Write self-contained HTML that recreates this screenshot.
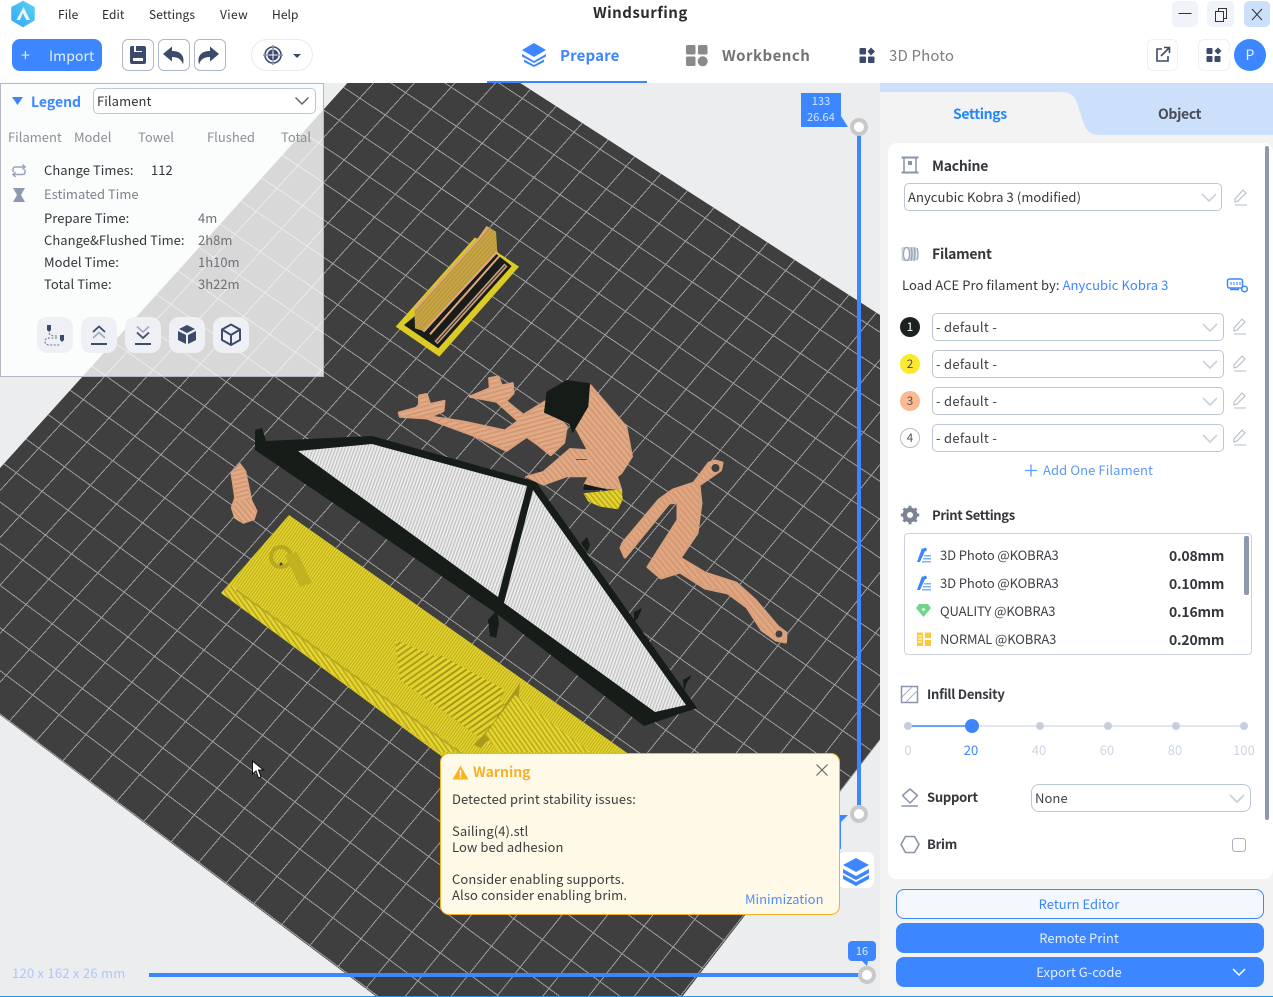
<!DOCTYPE html>
<html><head><meta charset="utf-8"><style>
html,body{margin:0;padding:0;width:1273px;height:997px;overflow:hidden;background:#fff}
body{position:relative;font-family:"Noto Sans CJK SC","Liberation Sans",sans-serif;font-size:13px;color:#3a3d42;letter-spacing:.08px}
.t{position:absolute;white-space:nowrap;line-height:20px;height:20px}
.b{font-weight:700;letter-spacing:-.25px}
.box{position:absolute;box-sizing:border-box}
.sel{position:absolute;box-sizing:border-box;background:#fff;border:1px solid #bcc6d8;border-radius:5px}
svg{position:absolute;overflow:hidden}
.d{letter-spacing:.3px}
.k{letter-spacing:-.1px}
.l{letter-spacing:.04px}
.z{letter-spacing:0}
</style></head><body>

<svg id="scene" style="left:0;top:0" width="1273" height="997" viewBox="0 0 1273 997">
<defs>
<clipPath id="bedclip"><polygon points="0,468 411,12.6 880,315 880,740 682,997 377,997 0,715"/></clipPath>
<pattern id="pe2" width="4.5" height="4.5" patternUnits="userSpaceOnUse" patternTransform="rotate(-40)"><rect width="4.5" height="4.5" fill="#e2a681"/><rect width="1.6" height="4.5" fill="#cf9874"/></pattern>
<pattern id="pf1" width="13" height="13" patternUnits="userSpaceOnUse" patternTransform="rotate(75)"><rect width="13" height="13" fill="#e4a985"/><rect width="5" height="13" fill="#cf9874"/></pattern>
<pattern id="pf2" width="13" height="13" patternUnits="userSpaceOnUse" patternTransform="rotate(-40)"><rect width="13" height="13" fill="#e4a985"/><rect width="5" height="13" fill="#cf9874"/></pattern>
<pattern id="wh" width="3" height="3" patternUnits="userSpaceOnUse" patternTransform="rotate(20)"><rect width="3" height="3" fill="#eeeeee"/><rect width="1.200" height="3" fill="#bebebe"/></pattern>
<pattern id="ye" width="2.5" height="2.5" patternUnits="userSpaceOnUse" patternTransform="rotate(35)"><rect width="2.500" height="2.500" fill="#e4d42c"/><rect width=".8" height="2.500" fill="#b3a31e"/></pattern>
<pattern id="ye2" width="5" height="5" patternUnits="userSpaceOnUse" patternTransform="rotate(55)"><rect width="5" height="5" fill="#e6d52e"/><rect width="2" height="5" fill="#a6971c"/></pattern>
<pattern id="ye3" width="4" height="4" patternUnits="userSpaceOnUse" patternTransform="rotate(-35)"><rect width="4" height="4" fill="#e6d52e"/><rect width="1.500" height="4" fill="#b8a820"/></pattern>
<pattern id="yf" width="12" height="12" patternUnits="userSpaceOnUse" patternTransform="rotate(-40)"><rect width="12" height="12" fill="#e4d42c"/><rect width="4" height="12" fill="#b3a31e"/></pattern>
<pattern id="tan" width="9" height="9" patternUnits="userSpaceOnUse" patternTransform="rotate(-48)"><rect width="9" height="9" fill="#c9a44e"/><rect width="9" height="4" fill="#b89a30"/></pattern>
</defs>
<rect width="1273" height="997" fill="#ecedef"/>
<polygon points="0,468 411,12.6 880,315 880,740 682,997 377,997 0,715" fill="#3f3f3f"/>
<g id="grid" clip-path="url(#bedclip)" stroke="#9c9c9c" stroke-width="1" fill="none" shape-rendering="crispEdges"></g>

<!-- yellow plate -->
<polygon points="289,515 640,762 460,770 221,593" fill="url(#ye)"/>
<polygon points="221,593 440,752 462,752 233,586" fill="url(#ye3)"/>
<path d="M236,590 462,754" stroke="#b9a922" stroke-width="2" fill="none"/>
<polygon points="395,640 445,660 520,715 490,745 400,680" fill="url(#ye2)" opacity=".85"/>
<polygon points="440,655 505,690 480,730 425,695" fill="url(#ye2)"/>
<polygon points="520,682 492,725 474,745 481,748 518,705" fill="#a89a1e"/>
<polygon points="515,695 590,752 500,752 485,735" fill="url(#ye3)"/>
<circle cx="281" cy="557" r="10" fill="none" stroke="#b8a820" stroke-width="4"/>
<polygon points="285,555 297,552 312,583 300,587" fill="#c2b222"/>
<circle cx="281" cy="564" r="1.500" fill="#444"/>

<!-- sail -->
<path d="M255,430 262,428 266,441 372,436 536,482 697,708 644,726 493,611 255,450Z" fill="#161c18"/>
<path d="M590,545 587,537 581,543 587,552Z M638,618 642,608 634,612 634,622Z M686,684 692,675 683,680 684,692Z M488,620 497,610 499,624 496,638 490,636Z" fill="#161c18"/>
<polygon points="298,451 372,444 527,486 498,597" fill="url(#wh)"/>
<polygon points="533,490 504,603 655,712 686,705" fill="url(#wh)"/>

<!-- peach peg -->
<g transform="translate(0,376) scale(.3333)">
<path d="M694,292 720,264 736,285 755,375 770,405 762,430 730,441 705,425 695,395 705,365Z" fill="url(#pf1)" stroke="#d9a07c" stroke-width="5"/>
<circle cx="733" cy="405" r="35" fill="url(#pf2)"/>
</g>

<!-- top small model & figure -->
<g transform="translate(380,220) scale(.3333)">
<polygon points="47,320 285,52 417,140 178,410" fill="#dccb26"/>
<polygon points="72,315 340,95 395,138 175,385" fill="#181d19"/>
<polygon points="103,265 295,52 320,18 348,35 352,95 135,335 105,325" fill="url(#tan)"/>
<path d="M105,268 300,52 322,20 M130,335 352,95 M150,343 358,108" stroke="#e2a681" stroke-width="6" fill="none"/>
<path d="M168,368 378,135" stroke="#c99a7c" stroke-width="13" fill="none"/>
<path d="M170,366 376,137" stroke="#2a2a26" stroke-width="3" fill="none"/>

<path d="M57,578 117,562 118,527 140,523 150,553 193,543 190,573 150,590 250,605 375,632 415,603 350,545 270,530 330,505 328,475 355,470 365,497 398,490 400,520 378,543 430,585 495,545 560,620 552,668 512,705 475,675 440,650 380,692 290,650 140,595 60,590Z" fill="url(#pf1)" stroke="#d9a07c" stroke-width="7" stroke-linejoin="round"/>
<path d="M632,495 740,620 757,710 725,760 712,770 725,810 612,795 625,770 560,770 490,795 438,770 490,755 570,686 622,690 585,620 625,555Z" fill="url(#pf2)" stroke="#d9a07c" stroke-width="4" stroke-linejoin="round"/>
<path d="M500,515 560,480 630,490 625,560 578,640 568,612 492,578Z" fill="#151b17"/>
<path d="M612,792 688,810 610,810Z" fill="#151b17"/>
<path d="M610,820 726,808 728,840 714,868 660,860 625,845Z" fill="url(#yf)"/>
<path d="M588,718 620,718 M470,745 482,755" stroke="#222" stroke-width="2"/>
</g>

<!-- wrench -->
<path d="M709,463 694,483 673,490 659,500 623,543 621,548 625,557 669,503 678,502 678,520 648,567 661,578 680,572 705,588 728,593 747,607 762,630 776,640 785.500,642 786,633 778,627 755,600 736,583 705,573 680,558 697,533 701,503 699,485 720.500,470 722,463 715,461Z" fill="url(#pe2)" stroke="#d9a07c" stroke-width="3" stroke-linejoin="round"/>
<circle cx="715.500" cy="468" r="4" fill="#3f3f3f"/>
<circle cx="779" cy="634" r="3.500" fill="#3f3f3f"/>

<!-- cursor -->
<path d="M252.500,761 V774 L256,771 258.500,778 261,777 258.500,770 263.500,770Z" fill="#fff" stroke="#111" stroke-width="1"/>

<!-- sliders -->
<rect x="857" y="130" width="4" height="685" fill="#3c86ff"/>
<path d="M801,93H841V116L848,127H801Z" fill="#3c86ff"/>
<circle cx="859" cy="127" r="7" fill="#fff" stroke="#c9c9c9" stroke-width="4"/>
<circle cx="859" cy="814" r="7" fill="#fff" stroke="#c9c9c9" stroke-width="4"/>
<rect x="840" y="815" width="1" height="34" fill="#3c86ff"/>
<path d="M839,815H848L839,824Z" fill="#3c86ff"/>
<rect x="149" y="973" width="715" height="4" fill="#3c86ff"/>
<rect x="848" y="941" width="28" height="20" rx="4" fill="#3c86ff"/>
<path d="M862,961h6l-1,5Z" fill="#3c86ff"/>
<circle cx="867" cy="975" r="7" fill="#fff" stroke="#c9c9c9" stroke-width="4"/>
<rect x="838" y="852" width="36" height="36" rx="7" fill="#fff"/>
<g fill="#3c86ff"><path d="M856,858 869,865 856,872 843,865Z"/><path d="M843,869 856,876 869,869 869,873 856,880 843,873Z"/><path d="M843,875 856,882 869,875 869,879 856,886 843,879Z"/></g>
</svg>

<div class="t" style="left:801px;width:40px;top:91px;text-align:center;color:#d5e4ff;font-size:11px;line-height:20px">133</div>
<div class="t" style="left:801px;width:40px;top:107px;text-align:center;color:#d5e4ff;font-size:11px;line-height:20px">26.64</div>
<div class="t" style="left:848px;width:28px;top:941px;text-align:center;color:#e3edff;font-size:11px">16</div>
<div class="t" style="left:12px;top:963px;color:#a9c8fb;font-size:13px;letter-spacing:.25px">120 x 162 x 26 mm</div>
<div class="box" style="left:0;top:996px;width:1273px;height:1px;background:#1f93ee"></div>

<!-- header -->
<div class="box" style="left:0;top:0;width:1273px;height:83px;background:#fff"></div>
<svg style="left:8px;top:0" width="30" height="28" viewBox="0 0 30 28">
<defs><linearGradient id="lg" x1="0" y1="1" x2="1" y2="0"><stop offset="0" stop-color="#36a7f5"/><stop offset="1" stop-color="#58d2f2"/></linearGradient></defs>
<path d="M15,1.500 26,7.500 26,20 15,26.500 4,20 4,7.500Z" fill="url(#lg)" stroke="url(#lg)" stroke-linejoin="round" stroke-width="1.500"/>
<path d="M15.500,7 22,20 18.300,20 14.800,13 12,20 8.500,20 Z" fill="#e8f6ff"/>
</svg>
<div class="t" style="left:58px;top:5px;font-size:12px;color:#26292e">File</div>
<div class="t" style="left:102px;top:5px;font-size:12px;color:#26292e">Edit</div>
<div class="t" style="left:149px;top:5px;font-size:12px;color:#26292e">Settings</div>
<div class="t" style="left:220px;top:5px;font-size:12px;color:#26292e;letter-spacing:.4px">View</div>
<div class="t" style="left:272px;top:5px;font-size:12px;color:#26292e">Help</div>
<div class="t b" style="left:593px;top:3px;font-size:15px;color:#2b2b2b;letter-spacing:.45px">Windsurfing</div>

<div class="box" style="left:1172px;top:1px;width:26px;height:26px;background:#f0f3fa;border-radius:5px"></div>
<div class="box" style="left:1207px;top:1px;width:27px;height:26px;background:#f0f3fa;border-radius:5px"></div>
<div class="box" style="left:1244px;top:1px;width:26px;height:26px;background:#cde0fb;border-radius:5px"></div>
<svg style="left:1172px;top:0" width="100" height="28" viewBox="1172 0 100 28" fill="none" stroke="#333" stroke-width="1">
<path d="M1178.500,13.500h13"/><path d="M1215.500,11.500h8v10h-8z M1218.500,11.500v-3h8v10h-3"/><path d="M1252,9l10,11M1262,9l-10,11"/>
</svg>

<div class="box" style="left:12px;top:39px;width:90px;height:32px;background:#3c86ff;border-radius:8px"></div>
<div class="t" style="left:21px;top:44px;color:#dce9ff;font-size:16px">+</div>
<div class="t" style="left:49px;top:46px;color:#e6efff;font-size:14px">Import</div>

<div class="box" style="left:122px;top:39px;width:32px;height:32px;border:1px solid #aeb7c9;border-radius:6px"></div>
<div class="box" style="left:158px;top:39px;width:32px;height:32px;border:1px solid #aeb7c9;border-radius:6px"></div>
<div class="box" style="left:194px;top:39px;width:32px;height:32px;border:1px solid #aeb7c9;border-radius:6px"></div>
<svg style="left:122px;top:39px" width="104" height="32" viewBox="0 0 104 32" fill="#3c4a6b">
<path fill-rule="evenodd" d="M10,7h2v6h8V7h2a2,2 0 0 1 2,2v14a2,2 0 0 1-2,2H10a2,2 0 0 1-2-2V9a2,2 0 0 1 2-2Zm1,12v3h10v-3Z"/><rect x="14" y="7" width="6" height="5"/>
<path d="M41,15 50,7.500 50,12C59,12 63,17 61,25.500 59.500,20.500 56,18 50,18L50,22.500Z"/>
<path d="M97,15 88,7.500 88,12C79,12 75,17 77,25.500 78.500,20.500 82,18 88,18L88,22.500Z"/>
</svg>
<div class="box" style="left:251px;top:39px;width:62px;height:32px;border:1px solid #e8eaf0;border-radius:16px"></div>
<svg style="left:260px;top:42px" width="50" height="26" viewBox="0 0 50 26">
<circle cx="13" cy="13" r="8" fill="#fff" stroke="#3c4a6b" stroke-width="1.600"/><circle cx="13" cy="13" r="5.500" fill="#3c4a6b"/>
<path d="M13,3V7M13,19V23M3,13H7M19,13H23" stroke="#8a97b5" stroke-width="1.600"/><path d="M13,8.500v9M8.500,13h9" stroke="#fff" stroke-width="1"/>
<path d="M33,12h8l-4,4Z" fill="#3c4a6b"/>
</svg>

<!-- center tabs -->
<div class="box" style="left:487px;top:81px;width:160px;height:2px;background:#3c86ff"></div>
<svg style="left:520px;top:42px" width="28" height="26" viewBox="0 0 28 26" fill="#3c86ff">
<path d="M14,1 26,8 14,15 2,8Z"/><path d="M2,12 14,19 26,12 26,14.500 14,21 2,14.500Z"/><path d="M4,17.500 14,23 24,17.500 24,20 14,25 4,20Z"/>
</svg>
<div class="t b" style="left:560px;top:46px;font-size:15px;color:#3c86ff;letter-spacing:.15px">Prepare</div>
<svg style="left:685px;top:44px" width="24" height="23" viewBox="0 0 24 23" fill="#8a8a8a">
<rect x="1" y="1" width="9.500" height="9.500" rx="1.500"/><rect x="13" y="1" width="9.500" height="9.500" rx="1.500"/><rect x="1" y="12.500" width="9.500" height="9.500" rx="1.500"/><circle cx="17.700" cy="17.300" r="5"/>
</svg>
<div class="t b" style="left:722px;top:46px;font-size:15px;color:#737373;letter-spacing:.45px">Workbench</div>
<svg style="left:859px;top:47px" width="18" height="17" viewBox="0 0 18 17" fill="#3c4a6b">
<rect x="0.500" y="1" width="6.500" height="6.500" rx="1"/><path d="M12,0.500 16,4.500 12,8.500 8.500,4.500Z"/><rect x="0.500" y="9.500" width="6.500" height="6.500" rx="1"/><rect x="9" y="9.500" width="6.500" height="6.500" rx="1"/>
</svg>
<div class="t" style="left:889px;top:46px;font-size:15px;color:#7d7d7d;letter-spacing:.15px">3D Photo</div>

<div class="box" style="left:1147px;top:39px;width:31px;height:32px;border:1px solid #eef0f5;border-radius:6px"></div>
<div class="box" style="left:1198px;top:39px;width:32px;height:32px;border:1px solid #eef0f5;border-radius:6px"></div>
<svg style="left:1147px;top:39px" width="90" height="32" viewBox="0 0 90 32">
<path d="M15,10H10v12h11v-5M14,17 22,9M17,8.500h5.500V14" fill="none" stroke="#3c4a6b" stroke-width="1.600"/>
<rect x="59.500" y="9" width="6" height="6" rx="1" fill="#3c4a6b"/><path d="M71,8.500 74.500,12 71,15.500 67.500,12Z" fill="#3c4a6b"/><rect x="59.500" y="17" width="6" height="6" rx="1" fill="#3c4a6b"/><rect x="67.500" y="17" width="6" height="6" rx="1" fill="#3c4a6b"/>
</svg>
<div class="box" style="left:1234px;top:39px;width:32px;height:32px;background:#3c86ff;border-radius:50%;box-shadow:-5px 0 0 #fff"></div>
<div class="t" style="left:1234px;width:32px;top:45px;text-align:center;color:#e6efff;font-size:14px">P</div>

<!-- legend -->
<div class="box" style="left:0;top:83px;width:324px;height:294px;background:rgba(255,255,255,.8);border:1px solid #b3b8c4"></div>
<svg style="left:11px;top:96px" width="13" height="10"><path d="M1,1H12L6.500,9Z" fill="#3c86ff"/></svg>
<div class="t b" style="left:31px;top:92px;font-size:14px;color:#3c86ff;letter-spacing:0">Legend</div>
<div class="sel" style="left:93px;top:88px;width:223px;height:26px"></div>
<div class="t" style="left:97px;top:91px;color:#2f3237">Filament</div>
<svg style="left:294px;top:96px" width="16" height="10"><path d="M1.500,1.500 8,8 14.500,1.500" fill="none" stroke="#5b6478" stroke-width="1.500"/></svg>
<div class="t z" style="left:8px;top:127px;color:#8b9098">Filament</div>
<div class="t z" style="left:74px;top:127px;color:#8b9098">Model</div>
<div class="t z" style="left:138px;top:127px;color:#8b9098">Towel</div>
<div class="t z" style="left:207px;top:127px;color:#8b9098">Flushed</div>
<div class="t z" style="left:281px;top:127px;color:#8b9098">Total</div>
<svg style="left:10px;top:162px" width="18" height="44" viewBox="0 0 18 44" fill="none" stroke="#99a3b8" stroke-width="1.500">
<path d="M3,10V7.500Q3,5 5.500,5H15M12.500,2.500 15,5 12.500,7.500M15,7.500V10Q15,12.500 12.500,12.500H3M5.500,10 3,12.500 5.500,15"/>
<path d="M3,26H15L11,33 15,40H3L7,33Z" fill="#8f99ad" stroke="none"/>
</svg>
<div class="t l" style="left:44px;top:160px;color:#33363b">Change Times:</div>
<div class="t l" style="left:151px;top:160px;color:#33363b">112</div>
<div class="t z" style="left:44px;top:184px;color:#7d828b">Estimated Time</div>
<div class="t l" style="left:44px;top:208px;color:#33363b">Prepare Time:</div>
<div class="t z" style="left:198px;top:208px;color:#6c7077">4m</div>
<div class="t l" style="left:44px;top:230px;color:#33363b">Change&amp;Flushed Time:</div>
<div class="t z" style="left:198px;top:230px;color:#6c7077">2h8m</div>
<div class="t l" style="left:44px;top:252px;color:#33363b">Model Time:</div>
<div class="t z" style="left:198px;top:252px;color:#6c7077">1h10m</div>
<div class="t l" style="left:44px;top:274px;color:#33363b">Total Time:</div>
<div class="t z" style="left:198px;top:274px;color:#6c7077">3h22m</div>
<div class="box" style="left:37px;top:317px;width:36px;height:36px;background:#eef0f5;border-radius:10px"></div>
<div class="box" style="left:81px;top:317px;width:36px;height:36px;background:#eef0f5;border-radius:10px"></div>
<div class="box" style="left:125px;top:317px;width:36px;height:36px;background:#eef0f5;border-radius:10px"></div>
<div class="box" style="left:169px;top:317px;width:36px;height:36px;background:#eef0f5;border-radius:10px"></div>
<div class="box" style="left:213px;top:317px;width:36px;height:36px;background:#eef0f5;border-radius:10px"></div>
<svg style="left:37px;top:317px" width="212" height="36" viewBox="0 0 212 36" fill="none">
<path d="M10,8h4v5l-2,2-2-2Z M23,18h4v5l-2,2-2-2Z" fill="#3c4a6b"/>
<path d="M12,16Q13,19 18,19H20M20,21H13Q8,21 8,24.500T13,28H23" stroke="#6b7690" stroke-width="1.100" stroke-dasharray="2 1.500"/>
<path d="M56,15 62,9.500 68,15" stroke="#3c4a6b" stroke-width="1.800"/><path d="M56,21 62,15.500 68,21" stroke="#a5aec0" stroke-width="1.800"/><path d="M54,27H70" stroke="#3c4a6b" stroke-width="2"/>
<path d="M100,9.500 106,15 112,9.500" stroke="#a5aec0" stroke-width="1.800"/><path d="M100,15.500 106,21 112,15.500" stroke="#3c4a6b" stroke-width="1.800"/><path d="M98,27H114" stroke="#3c4a6b" stroke-width="2"/>
<path d="M150,8 158,12 150,16 142,12Z M141,14 149,18V27L141,23Z M159,14 151,18V27L159,23Z" fill="#3c4a6b"/>
<path d="M194,7.500 203,12.500V23L194,28 185,23V12.500ZM185,12.500 194,18 203,12.500M194,18V28" stroke="#3c4a6b" stroke-width="2" stroke-linejoin="round"/>
</svg>

<!-- warning -->
<div class="box" style="left:440px;top:753px;width:400px;height:162px;background:#fff9e7;border:1px solid #f5b324;border-radius:9px"></div>
<svg style="left:452px;top:765px" width="17" height="15"><path d="M8.500,.5 16.500,14.500H.5Z" fill="#f9b320"/><path d="M8.500,5v5.500M8.500,11.500v1.500" stroke="#fff" stroke-width="1.400"/></svg>
<div class="t b" style="left:473px;top:762px;font-size:14px;color:#f7b02a;letter-spacing:0">Warning</div>
<svg style="left:815px;top:763px" width="14" height="14"><path d="M1.500,1.500 12.500,12.500M12.500,1.500 1.500,12.500" stroke="#666" stroke-width="1.200"/></svg>
<div class="t" style="left:452px;top:789px;color:#3c3c3c">Detected print stability issues:</div>
<div class="t" style="left:452px;top:821px;color:#3c3c3c">Sailing(4).stl</div>
<div class="t" style="left:452px;top:837px;color:#3c3c3c">Low bed adhesion</div>
<div class="t" style="left:452px;top:869px;color:#3c3c3c">Consider enabling supports.</div>
<div class="t" style="left:452px;top:885px;color:#3c3c3c;letter-spacing:.12px">Also consider enabling brim.</div>
<div class="t z" style="left:745px;top:889px;color:#4f8ff5">Minimization</div>

<!-- right panel -->
<div class="box" style="left:880px;top:83px;width:393px;height:913px;background:#f3f3f4"></div>
<svg style="left:880px;top:83px" width="393" height="52" viewBox="0 0 393 52">
<rect width="393" height="52" fill="#cce0fc"/>
<path d="M0,9H182Q193,9 197,20L204,41Q208,52 219,52H0Z" fill="#f3f3f4"/>
</svg>
<div class="t b" style="left:953px;top:104px;color:#1f87ff;font-size:14px;letter-spacing:-.35px">Settings</div>
<div class="t b" style="left:1158px;top:104px;color:#4a4d55;font-size:14px;letter-spacing:-.35px">Object</div>
<div class="box" style="left:888px;top:143px;width:385px;height:736px;background:#fff;border-radius:9px"></div>
<div class="box" style="left:1265px;top:146px;width:4px;height:674px;background:#8d99b0;border-radius:2px"></div>

<svg style="left:900px;top:155px" width="20" height="110" viewBox="0 0 20 110">
<path d="M1.500,2.500H18.500M1.500,17.500H18.500" stroke="#8a94a8" stroke-width="2"/><path d="M4,3V17M16,3V17" stroke="#8a94a8" stroke-width="1.500"/><rect x="8" y="6" width="4" height="4" fill="#8a94a8"/>
<g fill="none" stroke="#97a1b5" stroke-width="1.200"><rect x="1.500" y="92" width="15" height="14" rx="2" fill="#cdd3de" stroke="none"/><ellipse cx="6.500" cy="99" rx="3" ry="6.500" fill="#fff"/><path d="M11,92.500Q13,99 11,105.500M14,92.500Q16,99 14,105.500M17,93Q19,99 17,105"/></g>
</svg>
<div class="t b" style="left:932px;top:156px;font-size:14px;color:#33363b">Machine</div>
<div class="sel" style="left:904px;top:183px;width:318px;height:28px"></div>
<div class="t" style="left:908px;top:187px;color:#33363b">Anycubic Kobra 3 (modified)</div>
<div class="t b" style="left:932px;top:244px;font-size:14px;color:#33363b">Filament</div>
<div class="t" style="left:902px;top:275px;color:#33363b">Load ACE Pro filament by: <span style="color:#3c86ff">Anycubic Kobra 3</span></div>
<svg style="left:1226px;top:277px" width="24" height="17" viewBox="0 0 24 17" fill="none" stroke="#3c86ff" stroke-width="1.500">
<rect x="1.500" y="2" width="15" height="9" rx="2"/><path d="M5,5v3M8,5v3M11,5v3M14,5v3" stroke-width="1.100"/><path d="M4,12.500H13"/><circle cx="18.500" cy="12" r="2.800"/>
</svg>

<div class="sel" style="left:932px;top:313px;width:292px;height:28px"></div>
<div class="sel" style="left:932px;top:350px;width:292px;height:28px"></div>
<div class="sel" style="left:932px;top:387px;width:292px;height:28px"></div>
<div class="sel" style="left:932px;top:424px;width:292px;height:28px"></div>
<div class="t d" style="left:936px;top:317px;color:#3e4147">- default -</div>
<div class="t d" style="left:936px;top:354px;color:#3e4147">- default -</div>
<div class="t d" style="left:936px;top:391px;color:#3e4147">- default -</div>
<div class="t d" style="left:936px;top:428px;color:#3e4147">- default -</div>
<svg style="left:900px;top:180px" width="350" height="640" viewBox="900 180 350 640" fill="none">
<g stroke="#ccd2dd" stroke-width="1.700">
<path d="M1202,194 1209,201 1216,194"/><path d="M1203,324 1210,331 1217,324"/><path d="M1203,361 1210,368 1217,361"/><path d="M1203,398 1210,405 1217,398"/><path d="M1203,435 1210,442 1217,435"/><path d="M1230,795 1237,802 1244,795"/></g>
<g stroke="#b6bcc8" stroke-width="1.100">
<path d="M1235,199 1243,190 1246,193 1238,201 1235,202ZM1235,205H1247"/>
<path d="M1234,328 1242,319 1245,322 1237,330 1234,331ZM1234,334H1246"/>
<path d="M1234,365 1242,356 1245,359 1237,367 1234,368ZM1234,371H1246"/>
<path d="M1234,402 1242,393 1245,396 1237,404 1234,405ZM1234,408H1246"/>
<path d="M1234,439 1242,430 1245,433 1237,441 1234,442ZM1234,445H1246"/></g>
<circle cx="910" cy="327" r="10" fill="#1c231f"/>
<circle cx="910" cy="364" r="10" fill="#fbe92f"/>
<circle cx="910" cy="401" r="10" fill="#fcb98f"/>
<circle cx="910" cy="438" r="9.500" fill="#fff" stroke="#bdbdbd"/>
<path d="M1031,464.500V476.500M1025,470.500H1037" stroke="#5b99fb" stroke-width="1.300"/>
</svg>
<div class="t" style="left:900px;width:20px;top:317px;text-align:center;color:#fff;font-size:12px">1</div>
<div class="t" style="left:900px;width:20px;top:354px;text-align:center;color:#555;font-size:12px">2</div>
<div class="t" style="left:900px;width:20px;top:391px;text-align:center;color:#555;font-size:12px">3</div>
<div class="t" style="left:900px;width:20px;top:428px;text-align:center;color:#555;font-size:12px">4</div>
<div class="t" style="left:1043px;top:460px;color:#5b99fb;letter-spacing:.1px">Add One Filament</div>

<svg style="left:900px;top:505px" width="20" height="20" viewBox="0 0 20 20"><circle cx="10" cy="10" r="5.500" fill="none" stroke="#7c8494" stroke-width="4"/><path d="M10,.8V19.200M.8,10H19.200M3.500,3.500 16.500,16.500M16.500,3.500 3.500,16.500" stroke="#7c8494" stroke-width="3"/><circle cx="10" cy="10" r="3" fill="#fff"/></svg>
<div class="t b" style="left:932px;top:505px;color:#33363b;letter-spacing:-.35px">Print Settings</div>
<div class="box" style="left:904px;top:533px;width:348px;height:122px;border:1px solid #ccd2dd;border-radius:4px"></div>
<div class="box" style="left:1244px;top:536px;width:5px;height:59px;background:#8d99b0;border-radius:2px"></div>
<svg style="left:916px;top:547px" width="16" height="100" viewBox="0 0 16 100">
<g fill="#3c86ff"><path d="M6,1 1,15 4,15 9,4Z"/><circle cx="9" cy="2.500" r="1.800"/><path d="M8,8H15V9.500H8ZM7,11H15V12.500H7ZM6,14H15V15.500H6Z" fill="#7db0ff"/></g>
<g transform="translate(0,28)" fill="#3c86ff"><path d="M6,1 1,15 4,15 9,4Z"/><circle cx="9" cy="2.500" r="1.800"/><path d="M8,8H15V9.500H8ZM7,11H15V12.500H7ZM6,14H15V15.500H6Z" fill="#7db0ff"/></g>
<path d="M3,57H12L15,61 7.500,70 0,61Z" fill="#6fd48a"/><path d="M7.500,60.500 9.500,62.500 7.500,64.500 5.500,62.500Z" fill="#e8fbee"/>
<path d="M1,85.500H7V99H1ZM9,85.500H15V91H9ZM9,93H15V99H9Z" fill="#fcc93a"/><path d="M2,89H6M2,92H6M2,95H6" stroke="#fff"/>
</svg>
<div class="t k" style="left:940px;top:545px;color:#3e4147">3D Photo @KOBRA3</div>
<div class="t k" style="left:940px;top:573px;color:#3e4147">3D Photo @KOBRA3</div>
<div class="t k" style="left:940px;top:601px;color:#3e4147">QUALITY @KOBRA3</div>
<div class="t k" style="left:940px;top:629px;color:#3e4147">NORMAL @KOBRA3</div>
<div class="t b" style="left:1169px;top:546px;color:#33363b;font-size:14px;letter-spacing:-.2px">0.08mm</div>
<div class="t b" style="left:1169px;top:574px;color:#33363b;font-size:14px;letter-spacing:-.2px">0.10mm</div>
<div class="t b" style="left:1169px;top:602px;color:#33363b;font-size:14px;letter-spacing:-.2px">0.16mm</div>
<div class="t b" style="left:1169px;top:630px;color:#33363b;font-size:14px;letter-spacing:-.2px">0.20mm</div>

<svg style="left:900px;top:684px" width="360" height="172" viewBox="900 684 360 172" fill="none">
<rect x="901.500" y="686.500" width="16" height="16" stroke="#8a94a8" stroke-width="1.500"/><path d="M902,697 912,687M906,702 918,690" stroke="#a6afc0"/>
<path d="M908,726H1244" stroke="#c4cede"/><path d="M908,726H972" stroke="#3c86ff" stroke-width="1.500"/>
<g fill="#c6cedd"><circle cx="908" cy="726" r="4"/><circle cx="1040" cy="726" r="4"/><circle cx="1108" cy="726" r="4"/><circle cx="1176" cy="726" r="4"/><circle cx="1244" cy="726" r="4"/></g>
<circle cx="972" cy="726" r="7" fill="#3c86ff"/>
<path d="M902.500,795.500 910,789 917.500,795.500 910,803Z" stroke="#8a94a8" stroke-width="1.500" stroke-linejoin="round"/><path d="M901.500,806H918" stroke="#8a94a8" stroke-width="1.500"/>
<path d="M901,844.500 905.500,836.500H914.500L919,844.500 914.500,852.500H905.500Z" stroke="#8a94a8" stroke-width="1.600"/>
<rect x="1232.500" y="838.500" width="13" height="13" rx="3" stroke="#aab0bd"/>
</svg>
<div class="t b" style="left:927px;top:684px;color:#33363b">Infill Density</div>
<div class="t" style="left:898px;width:20px;top:740px;text-align:center;color:#cdd5e4">0</div>
<div class="t" style="left:961px;width:20px;top:740px;text-align:center;color:#3c86ff">20</div>
<div class="t" style="left:1029px;width:20px;top:740px;text-align:center;color:#cdd5e4">40</div>
<div class="t" style="left:1097px;width:20px;top:740px;text-align:center;color:#cdd5e4">60</div>
<div class="t" style="left:1165px;width:20px;top:740px;text-align:center;color:#cdd5e4">80</div>
<div class="t" style="left:1233px;width:20px;top:740px;text-align:center;color:#cdd5e4">100</div>
<div class="t b" style="left:927px;top:787px;color:#33363b">Support</div>
<div class="box" style="left:1031px;top:784px;width:220px;height:28px;border:1px solid #bcc6d8;border-radius:8px"></div>
<div class="t" style="left:1035px;top:788px;color:#3e4147">None</div>
<svg style="left:1226px;top:792px" width="20" height="12"><path d="M4,3 11,10 18,3" fill="none" stroke="#ccd2dd" stroke-width="1.700"/></svg>
<div class="t b" style="left:927px;top:834px;color:#33363b">Brim</div>

<div class="box" style="left:896px;top:889px;width:368px;height:30px;background:#f4f7fe;border:1px solid #3c86ff;border-radius:8px"></div>
<div class="box" style="left:896px;top:923px;width:368px;height:30px;background:#3c86ff;border-radius:8px"></div>
<div class="box" style="left:896px;top:957px;width:368px;height:30px;background:#3c86ff;border-radius:8px"></div>
<div class="t z" style="left:895px;width:368px;top:894px;text-align:center;color:#3c86ff">Return Editor</div>
<div class="t z" style="left:895px;width:368px;top:928px;text-align:center;color:#e6efff">Remote Print</div>
<div class="t z" style="left:895px;width:368px;top:962px;text-align:center;color:#e6efff">Export G-code</div>
<svg style="left:1231px;top:967px" width="16" height="10"><path d="M2,2 8,8 14,2" fill="none" stroke="#fff" stroke-width="1.500"/></svg>

<script>
(function(){
var x0=109,y0=708.3,x1=412,y1=932,x2=875,y2=365.7,x3=580.1,y3=171.9;
var dx1=x1-x2,dx2=x3-x2,sx=x0-x1+x2-x3,dy1=y1-y2,dy2=y3-y2,sy=y0-y1+y2-y3;
var den=dx1*dy2-dx2*dy1,g=(sx*dy2-dx2*sy)/den,h=(dx1*sy-sx*dy1)/den;
var a=x1-x0+g*x1,b=x3-x0+h*x3,c=x0,d=y1-y0+g*y1,e=y3-y0+h*y3,f=y0;
function P(u,v){var w=g*u+h*v+1;return [(a*u+b*v+c)/w,(d*u+e*v+f)/w];}
var X0=0,X1=880,Y0=12,Y1=997;
function clip(A,B){
  var t0=0,t1=1,dx=B[0]-A[0],dy=B[1]-A[1];
  var ps=[-dx,dx,-dy,dy],qs=[A[0]-X0,X1-A[0],A[1]-Y0,Y1-A[1]];
  for(var k=0;k<4;k++){
    if(ps[k]===0){if(qs[k]<0)return '';continue;}
    var r=qs[k]/ps[k];
    if(ps[k]<0){if(r>t1)return '';if(r>t0)t0=r;}
    else{if(r<t0)return '';if(r<t1)t1=r;}
  }
  return 'M'+(A[0]+t0*dx).toFixed(1)+','+(A[1]+t0*dy).toFixed(1)+'L'+(A[0]+t1*dx).toFixed(1)+','+(A[1]+t1*dy).toFixed(1);
}
var s='',i;
for(i=-25;i<=45;i++){s+=clip(P(i/11,-1),P(i/11,2));}
for(i=-25;i<=50;i++){s+=clip(P(-2,i/22),P(3,i/22));}
var p=document.createElementNS('http://www.w3.org/2000/svg','path');
p.setAttribute('d',s);document.getElementById('grid').appendChild(p);
})();
</script>
</body></html>
